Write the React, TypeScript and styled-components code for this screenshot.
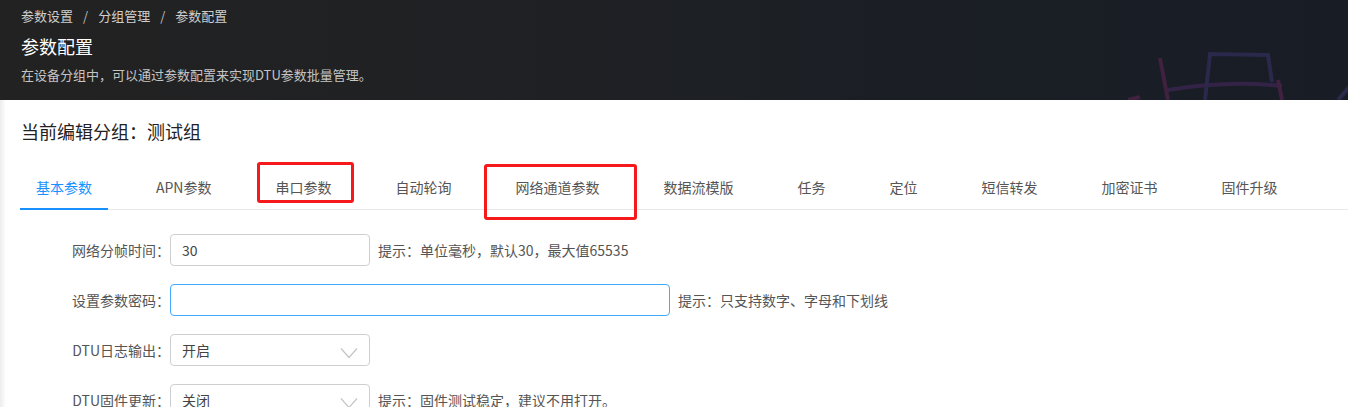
import React from "react";
import styled, { createGlobalStyle } from "styled-components";

const GlobalStyle = createGlobalStyle`
  html, body { margin: 0; padding: 0; background: #fff; }
  body {
    font-family: "Microsoft YaHei", "Noto Sans CJK SC", "Noto Sans", sans-serif;
    -webkit-font-smoothing: antialiased;
  }
  * { box-sizing: border-box; }
`;

const Page = styled.div`
  width: 1348px;
  height: 407px;
  overflow: hidden;
  position: relative;
  background: #fff;
`;

const Header = styled.header`
  position: relative;
  height: 100px;
  padding: 6px 21px 0;
  background: linear-gradient(90deg, #222222 0%, #202124 35%, #1b1f25 65%, #181c25 100%);
  overflow: hidden;
`;

const Breadcrumb = styled.nav`
  display: flex;
  align-items: center;
  gap: 10px;
  font-size: 13px;
  line-height: 20px;
  color: #cfcfcf;
`;

const Sep = styled.span`
  color: #bdbdbd;
`;

const Title = styled.h1`
  margin: 8px 0 0;
  font-size: 18px;
  font-weight: 400;
  line-height: 24px;
  color: #fff;
`;

const Desc = styled.p`
  margin: 8px 0 0;
  font-size: 13px;
  line-height: 18px;
  color: #c4c4c4;
`;

const Punct = styled.span`
  font-feature-settings: "fwid";
`;

const Deco = styled.svg`
  position: absolute;
  right: 0;
  top: 0;
  pointer-events: none;
`;

const Content = styled.main`
  position: relative;
  padding: 17px 0 0 20px;
  &::before {
    content: "";
    position: absolute;
    left: 0;
    top: 0;
    bottom: 0;
    width: 6px;
    background: linear-gradient(90deg, #ececec, rgba(255,255,255,0));
  }
`;

const GroupTitle = styled.h2`
  margin: 0 0 0 1px;
  font-size: 18px;
  font-weight: 400;
  line-height: 28px;
  color: #222;
`;

const TabBar = styled.div`
  display: flex;
  margin-top: 20px;
  border-bottom: 1px solid #e8e8e8;
`;

const Tab = styled.div<{ $active?: boolean }>`
  position: relative;
  padding: 12px 16px 12px;
  margin-right: 32px;
  font-size: 14px;
  line-height: 20px;
  white-space: nowrap;
  color: ${(p) => (p.$active ? "#1890ff" : "#555")};
  &::after {
    content: "";
    display: ${(p) => (p.$active ? "block" : "none")};
    position: absolute;
    left: 0;
    right: 0;
    bottom: -1px;
    height: 2px;
    background: #1890ff;
  }
`;

const Mark = styled.div<{ $l: number; $t: number; $w: number; $h: number }>`
  position: absolute;
  left: ${(p) => p.$l}px;
  top: ${(p) => p.$t}px;
  width: ${(p) => p.$w}px;
  height: ${(p) => p.$h}px;
  border: 3px solid #f5191c;
  border-radius: 3px;
  pointer-events: none;
`;

const Form = styled.div`
  display: flex;
  flex-direction: column;
  gap: 18px;
  padding-top: 24px;
`;

const Row = styled.div`
  display: flex;
  align-items: center;
  height: 32px;
`;

const Label = styled.label`
  width: 150px;
  text-align: right;
  font-size: 14px;
  color: #555;
  white-space: nowrap;
`;

const Input = styled.div<{ $w: number; $focus?: boolean }>`
  display: flex;
  align-items: center;
  justify-content: space-between;
  width: ${(p) => p.$w}px;
  height: 32px;
  padding: 0 11px;
  border: 1px solid ${(p) => (p.$focus ? "#40a9ff" : "#cfcfcf")};
  border-radius: 4px;
  font-size: 14px;
  color: #444;
  background: #fff;
`;

const Hint = styled.span`
  margin-left: 8px;
  font-size: 14px;
  color: #555;
  white-space: nowrap;
`;

const Chevron = () => (
  <svg width="18" height="12" viewBox="0 0 18 12" style={{ marginTop: 5 }}>
    <path d="M1 1.5 L9 10.5 L17 1.5" fill="none" stroke="#c4c4c4" strokeWidth="1.2" />
  </svg>
);

const P = ({ c }: { c: string }) => <Punct>{c}</Punct>;

const tabs = [
  "基本参数",
  "APN参数",
  "串口参数",
  "自动轮询",
  "网络通道参数",
  "数据流模版",
  "任务",
  "定位",
  "短信转发",
  "加密证书",
  "固件升级",
];

export default function App() {
  return (
    <Page>
      <GlobalStyle />
      <Header>
        <Breadcrumb>
          <span>参数设置</span>
          <Sep>/</Sep>
          <span>分组管理</span>
          <Sep>/</Sep>
          <span>参数配置</span>
        </Breadcrumb>
        <Title>参数配置</Title>
        <Desc>
          在设备分组中<P c="，" />可以通过参数配置来实现DTU参数批量管理<P c="。" />
        </Desc>
        <Deco width="260" height="100" viewBox="0 0 260 100">
          <g fill="none" strokeWidth="4" opacity="0.8">
            <path d="M72 58 L80 100" stroke="#4a2346" />
            <path d="M80 90 Q140 80 194 86" stroke="#3a2550" />
            <path d="M117 100 L122 54 L180 55 L184 82" stroke="#2f2c55" />
            <path d="M190 80 L194 100" stroke="#4a2346" />
            <path d="M40 100 L52 97" stroke="#4a2346" />
            <path d="M250 100 L262 86" stroke="#2f2c55" />
          </g>
        </Deco>
      </Header>
      <Content>
        <GroupTitle>
          当前编辑分组<P c="：" />测试组
        </GroupTitle>
        <TabBar>
          {tabs.map((t, i) => (
            <Tab key={t} $active={i === 0}>
              {t}
            </Tab>
          ))}
        </TabBar>
        <Form>
          <Row>
            <Label>
              网络分帧时间<P c="：" />
            </Label>
            <Input $w={200}>30</Input>
            <Hint>
              提示<P c="：" />单位毫秒<P c="，" />默认30<P c="，" />最大值65535
            </Hint>
          </Row>
          <Row>
            <Label>
              设置参数密码<P c="：" />
            </Label>
            <Input $w={500} $focus />
            <Hint>
              提示<P c="：" />只支持数字<P c="、" />字母和下划线
            </Hint>
          </Row>
          <Row>
            <Label>
              DTU日志输出<P c="：" />
            </Label>
            <Input $w={200}>
              开启
              <Chevron />
            </Input>
          </Row>
          <Row>
            <Label>
              DTU固件更新<P c="：" />
            </Label>
            <Input $w={200}>
              关闭
              <Chevron />
            </Input>
            <Hint>
              提示<P c="：" />固件测试稳定<P c="，" />建议不用打开<P c="。" />
            </Hint>
          </Row>
        </Form>
      </Content>
      <Mark $l={257} $t={162} $w={97} $h={41} />
      <Mark $l={484} $t={164} $w={153} $h={56} />
    </Page>
  );
}
